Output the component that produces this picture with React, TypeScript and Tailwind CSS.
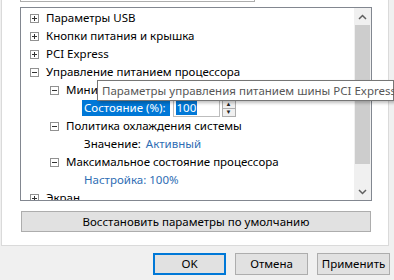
import React from "react";

const font = { fontFamily: '"Noto Sans", "Segoe UI", sans-serif' };

function Box({ open }: { open: boolean }) {
  return (
    <span className="relative inline-block h-[9px] w-[9px] shrink-0 border border-[#919191] bg-white">
      <span className="absolute left-[1px] top-[3px] h-[1px] w-[5px] bg-[#333]" />
      {!open && <span className="absolute left-[3px] top-[1px] h-[5px] w-[1px] bg-[#333]" />}
    </span>
  );
}

type Row = { level: number; text: string; box?: "plus" | "minus"; value?: string; link?: boolean };

const rows: Row[] = [
  { level: 0, text: "Параметры USB", box: "plus" },
  { level: 0, text: "Кнопки питания и крышка", box: "plus" },
  { level: 0, text: "PCI Express", box: "plus" },
  { level: 0, text: "Управление питанием процессора", box: "minus" },
  { level: 1, text: "Минимальное состояние процессора", box: "minus" },
  { level: 2, text: "__edit__" },
  { level: 1, text: "Политика охлаждения системы", box: "minus" },
  { level: 2, text: "Значение:", value: "Активный" },
  { level: 1, text: "Максимальное состояние процессора", box: "minus" },
  { level: 2, text: "Настройка: 100%", link: true },
  { level: 0, text: "Экран", box: "plus" },
];

function TreeRow({ r }: { r: Row }) {
  if (r.text === "__edit__") {
    return (
      <div className="flex h-[18px] items-center pl-[61px]">
        <span className="flex h-[16px] items-center bg-[#0078d7] pl-[2px] pr-[4px] text-white">
          Состояние (%):
        </span>
        <span className="ml-[3px] flex h-[17px] w-[47px] items-center border border-[#bdbdbd] bg-white pl-[2px]">
          <span className="bg-[#0078d7] px-[1px] leading-[14px] text-white">100</span>
        </span>
        <span className="ml-[2px] flex h-[17px] w-[14px] flex-col border border-[#adadad] bg-[#f0f0f0]">
          <span className="flex h-[7px] items-center justify-center text-[6px] leading-none text-[#222]">▲</span>
          <span className="h-[1px] bg-[#adadad]" />
          <span className="flex h-[7px] items-center justify-center text-[6px] leading-none text-[#222]">▼</span>
        </span>
      </div>
    );
  }
  const pad = r.level === 0 ? "pl-[9px]" : r.level === 1 ? "pl-[29px]" : "pl-[63px]";
  return (
    <div className={`flex h-[18px] items-center whitespace-nowrap ${pad}`}>
      {r.box && <Box open={r.box === "minus"} />}
      <span className={`${r.box ? "ml-[7px]" : ""} ${r.link ? "text-[#2e6db4]" : "text-black"}`}>
        {r.text}
        {r.value && <span className="ml-[5px] text-[#2e6db4]">{r.value}</span>}
      </span>
    </div>
  );
}

function Btn({ label, def }: { label: string; def?: boolean }) {
  return (
    <div
      className={`flex h-[22px] w-[73px] items-center justify-center bg-[#e1e1e1] text-black ${
        def ? "border-2 border-[#0078d7]" : "border border-[#adadad]"
      }`}
    >
      {label}
    </div>
  );
}

export default function App() {
  return (
    <div className="relative h-[280px] w-[394px] overflow-hidden bg-[#f0f0f0] text-[11.5px]" style={font}>
      <div className="ml-[1px] flex h-[246px] w-[388px] flex-col border-x border-b border-[#dadada] bg-white">
        {/* bottom of the plan combobox */}
        <div className="ml-[18px] h-[2px] w-[235px] border-x border-b border-[#adadad]" />
        {/* tree */}
        <div className="ml-[18px] mt-[5px] flex h-[194px] w-[352px] overflow-hidden border border-[#828790]">
          <div className="flex-1 pt-[1px]">
            {rows.map((r, i) => (
              <TreeRow key={i} r={r} />
            ))}
          </div>
          <div className="flex w-[17px] flex-col bg-[#f0f0f0]">
            <div className="flex h-[17px] items-center justify-center">
              <svg width="9" height="6" viewBox="0 0 9 6">
                <path d="M1 5 L4.5 1.5 L8 5" fill="none" stroke="#606060" strokeWidth="1.5" />
              </svg>
            </div>
            <div className="mx-[1px] h-[139px] bg-[#cdcdcd]" />
            <div className="flex-1" />
            <div className="flex h-[17px] items-center justify-center">
              <svg width="9" height="6" viewBox="0 0 9 6">
                <path d="M1 1 L4.5 4.5 L8 1" fill="none" stroke="#606060" strokeWidth="1.5" />
              </svg>
            </div>
          </div>
        </div>
        <div className="ml-[19px] mt-[10px] flex h-[21px] w-[350px] items-center justify-center border border-[#adadad] bg-[#e1e1e1] text-black">
          Восстановить параметры по умолчанию
        </div>
      </div>
      <div className="mt-[7px] flex justify-end gap-[9px] pr-[4px]">
        <Btn label="OK" def />
        <Btn label="Отмена" />
        <Btn label="Применить" />
      </div>
      {/* tooltip */}
      <div className="absolute left-[97px] top-[80px] flex h-[21px] w-[297px] items-center whitespace-nowrap border border-[#767676] bg-white pl-[4px] text-[#575757] shadow-[2px_2px_3px_rgba(0,0,0,0.25)]">
        Параметры управления питанием шины PCI Express
      </div>
    </div>
  );
}
